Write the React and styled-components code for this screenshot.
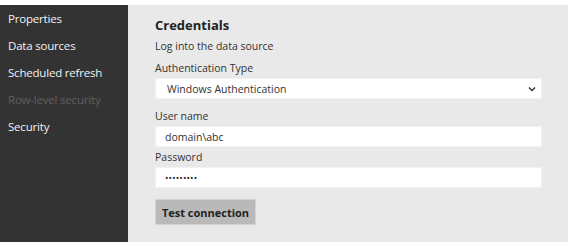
import React from "react";
import styled, { createGlobalStyle } from "styled-components";

const GlobalStyle = createGlobalStyle`
  html, body {
    margin: 0;
    padding: 0;
    background: #ffffff;
  }
  body {
    font-family: "Open Sans", "Noto Sans", sans-serif;
  }
`;

const Page = styled.div`
  display: flex;
  width: 568px;
  height: 242px;
  padding-top: 5px;
  box-sizing: border-box;
  overflow: hidden;
`;

const Sidebar = styled.nav`
  width: 128px;
  flex-shrink: 0;
  background: #333333;
  display: flex;
  flex-direction: column;
  padding: 6px 0 0 8px;
  box-sizing: border-box;
`;

const NavItem = styled.div`
  height: 27px;
  line-height: 16px;
  font-size: 11.5px;
  letter-spacing: -0.2px;
  color: ${(p) => (p.disabled ? "#5f5f5f" : "#f2f2f2")};
`;

const Main = styled.main`
  flex: 1;
  background: #e9e9e9;
  padding: 11px 26px 0 27px;
  display: flex;
  flex-direction: column;
`;

const Title = styled.h2`
  margin: 0;
  font-size: 13px;
  font-weight: 700;
  color: #222222;
  line-height: 18px;
`;

const Subtitle = styled.p`
  margin: 5px 0 0;
  font-size: 10.5px;
  color: #333333;
  line-height: 15px;
`;

const Label = styled.label`
  display: block;
  margin-top: ${(p) => p.$top}px;
  font-size: 10.5px;
  color: #333333;
  line-height: 15px;
`;

const Field = styled.div`
  position: relative;
  margin-top: 2px;
  height: 21px;
  background: #ffffff;
  border: 1px solid #f2f2f2;
  box-sizing: border-box;
  display: flex;
  align-items: center;
  padding-left: ${(p) => p.$pad || 9}px;
  font-size: 10.5px;
  color: #333333;
`;

const Chevron = styled.svg`
  position: absolute;
  right: 5px;
  top: 7px;
`;

const Dots = styled.span`
  font-size: 9px;
  letter-spacing: 0.2px;
  color: #222222;
  line-height: 1;
`;

const Button = styled.button`
  margin-top: 11px;
  align-self: flex-start;
  width: 101px;
  height: 26px;
  background: #b9b9b9;
  border: 1px solid #d2d2d2;
  font-family: inherit;
  font-size: 11px;
  font-weight: 700;
  color: #222222;
  padding: 0;
`;

export default function App() {
  return (
    <>
      <GlobalStyle />
      <Page>
        <Sidebar>
          <NavItem>Properties</NavItem>
          <NavItem>Data sources</NavItem>
          <NavItem>Scheduled refresh</NavItem>
          <NavItem disabled>Row-level security</NavItem>
          <NavItem>Security</NavItem>
        </Sidebar>
        <Main>
          <Title>Credentials</Title>
          <Subtitle>Log into the data source</Subtitle>
          <Label $top={7}>Authentication Type</Label>
          <Field $pad={11}>
            Windows Authentication
            <Chevron width="8" height="6" viewBox="0 0 8 6">
              <path d="M1 1.5 L4 4.5 L7 1.5" fill="none" stroke="#333" strokeWidth="1.4" />
            </Chevron>
          </Field>
          <Label $top={10}>User name</Label>
          <Field>domain\abc</Field>
          <Label $top={3}>Password</Label>
          <Field>
            <Dots>•••••••••</Dots>
          </Field>
          <Button>Test connection</Button>
        </Main>
      </Page>
    </>
  );
}
